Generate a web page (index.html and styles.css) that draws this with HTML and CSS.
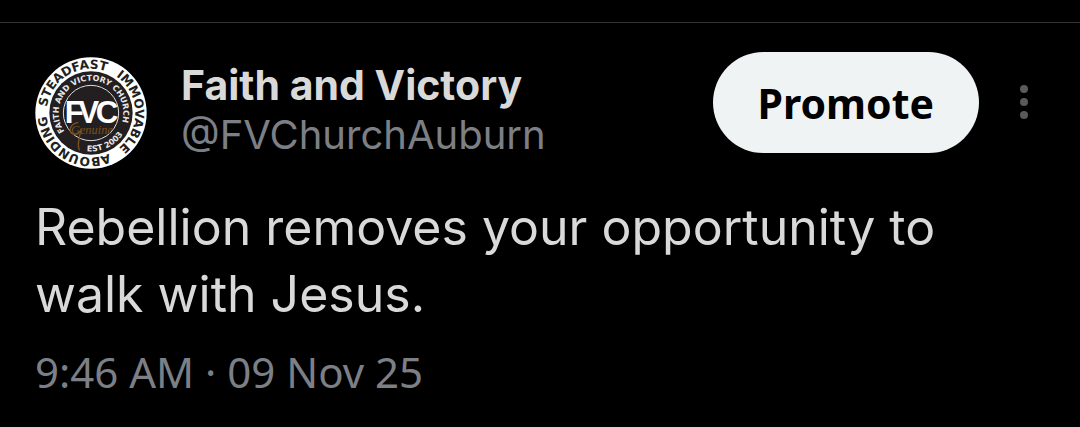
FILE: index.html
```html
<!DOCTYPE html>
<html lang="en">
<head>
<meta charset="utf-8">
<meta name="viewport" content="width=device-width, initial-scale=1">
<title>Post</title>
<link rel="stylesheet" href="styles.css">
</head>
<body>
<article class="post">
  <header class="post-header">
    <svg class="avatar" viewBox="-168 -168 336 336" role="img" aria-label="Faith and Victory">
      <defs>
        <path id="outer" d="M0 133A133 133 0 0 1 0 -133A133 133 0 0 1 0 133"/>
        <path id="inner" d="M0 97A97 97 0 0 1 0 -97A97 97 0 0 1 0 97"/>
        <path id="lower" d="M0 -115A115 115 0 0 0 0 115A115 115 0 0 0 0 -115"/>
      </defs>
      <circle r="167" fill="#fff"/>
      <circle r="125" fill="#231f20"/>
      <circle r="83" fill="none" stroke="#ddd" stroke-width="3"/>
      <g class="ring-text">
        <text transform="rotate(-31)"><textPath href="#outer" startOffset="50%">STEADFAST</textPath></text>
        <text transform="rotate(88)"><textPath href="#outer" startOffset="50%">IMMOVABLE</textPath></text>
        <text transform="rotate(211)"><textPath href="#outer" startOffset="50%">ABOUNDING</textPath></text>
      </g>
      <g class="seal-text">
        <text transform="rotate(-9)"><textPath href="#inner" startOffset="50%">FAITH AND VICTORY CHURCH</textPath></text>
        <text transform="rotate(-25)"><textPath href="#lower" startOffset="50%">EST 2003</textPath></text>
      </g>
      <path d="M-38 28C-62 32 -72 58 -52 64C-36 66 -28 50 -30 46M-30 48C-34 74 -44 100 -34 112" fill="none" stroke="#79501f" stroke-width="4"/>
      <text class="monogram" y="29" x="-79 -38 14">FVC</text>
      <text class="script" x="-60" y="62">Genuine</text>
    </svg>
    <div class="author">
      <a class="name" href="#">Faith and Victory</a>
      <a class="handle" href="#">@FVChurchAuburn</a>
    </div>
    <button class="promote" type="button">Promote</button>
    <button class="more" type="button" aria-label="More">
      <svg class="dots" viewBox="0 0 8 34"><circle cx="4" cy="4" r="4"/><circle cx="4" cy="17" r="4"/><circle cx="4" cy="30" r="4"/></svg>
    </button>
  </header>
  <p class="body">Rebellion removes your opportunity to walk with Jesus.</p>
  <time class="time" datetime="2025-11-09T09:46">9:46 AM · 09 Nov 25</time>
</article>
</body>
</html>
```

FILE: styles.css
```css
body {
  margin: 0;
  background: #000;
  font-family: Inter, "Noto Sans", sans-serif;
}
.post {
  margin-top: 22px;
  padding: 29px 35px 0;
  border-top: 1px solid #2f3336;
}
.post-header {
  display: flex;
  align-items: flex-start;
}
.avatar {
  width: 112px;
  height: 112px;
  margin-top: 5px;
  flex: none;
}
.ring-text {
  font: bold 37px "DejaVu Sans", sans-serif;
  fill: #231f20;
  text-anchor: middle;
}
.seal-text {
  font: bold 24px "DejaVu Sans", sans-serif;
  fill: #e8e8e8;
  text-anchor: middle;
}
.monogram {
  font: bold 94px "Liberation Sans", sans-serif;
  fill: #fff;
}
.script {
  font: italic 37px "Liberation Serif", serif;
  fill: #79501f;
}
.author {
  flex: 1;
  min-width: 0;
  display: flex;
  flex-direction: column;
  padding: 8px 0 0 34px;
  line-height: 50px;
}
.author a {
  text-decoration: none;
}
.name {
  color: #d9d9d9;
  font-size: 41px;
  font-weight: 700;
}
.handle {
  color: #7c8086;
  font-size: 40px;
}
.promote {
  height: 101px;
  padding: 0 45px;
  border: 0;
  border-radius: 51px;
  background: #eff3f4;
  color: #000;
  font: bold 41px "Noto Sans", sans-serif;
}
.more {
  height: 100px;
  margin: 0 7px 0 31px;
  padding: 0 10px;
  border: 0;
  background: none;
}
.dots {
  display: block;
  width: 8px;
  height: 34px;
  fill: #5a5a5a;
}
.body {
  margin: 25px 0 0;
  color: #d9d9d9;
  font-size: 50px;
  line-height: 67px;
}
.time {
  display: block;
  margin-top: 14px;
  color: #7c8086;
  font-family: "Noto Sans", sans-serif;
  font-size: 42px;
  line-height: 60px;
}
```
